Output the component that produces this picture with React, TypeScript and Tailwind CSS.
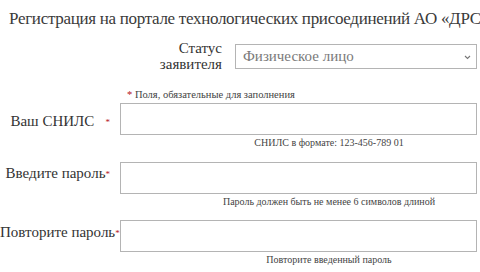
import React from "react";

function Star() {
  return <span className="text-[9px] text-[#b5121b] align-middle">*</span>;
}

interface FieldProps {
  label: React.ReactNode;
  hint: string;
  labelPad: string;
  rowGap: string;
}

function Field({ label, hint, labelPad, rowGap }: FieldProps) {
  return (
    <div className={rowGap}>
      <div className="flex">
        <div className={`w-[120px] shrink-0 pr-[10px] text-right text-[15px] leading-[17px] whitespace-nowrap text-[#333] ${labelPad}`}>
          {label}
        </div>
        <input
          type="text"
          className="h-[32px] w-[357px] border border-[#b4b4b4] bg-white outline-none"
        />
      </div>
      <div className="ml-[181px] w-[296px] text-center text-[10px] leading-[12px] text-[#444] whitespace-nowrap mt-[2px]">
        {hint}
      </div>
    </div>
  );
}

export default function App() {
  return (
    <div className="w-[480px] h-[272px] bg-white overflow-hidden font-['Liberation_Serif','Times_New_Roman',serif]">
      <h1 className="pl-[9px] pt-[8px] text-[17px] leading-[21px] tracking-[-0.3px] text-[#3a3a3a] whitespace-nowrap">
        Регистрация на портале технологических присоединений АО «ДРСК»
      </h1>

      <div className="flex items-center mt-[11px]">
        <div className="w-[223px] shrink-0 pr-[1px] text-right text-[15px] leading-[16px] text-[#333]">
          Статус
          <br />
          заявителя
        </div>
        <div className="relative ml-[12px] h-[25px] w-[242px] border border-[#b4b4b4] bg-white">
          <span className="absolute left-[7px] top-[3px] text-[15px] leading-[17px] text-[#7a7a7a]">
            Физическое лицо
          </span>
          <svg className="absolute right-[5px] top-[10px]" width="7" height="5" viewBox="0 0 7 5">
            <path d="M1 1 L3.5 3.5 L6 1" fill="none" stroke="#777" strokeWidth="1.1" />
          </svg>
        </div>
      </div>

      <div className="pl-[127px] mt-[17px] text-[10.5px] leading-[12px] text-[#444] whitespace-nowrap">
        <span className="text-[#b5121b]">*</span> Поля, обязательные для заполнения
      </div>

      <Field
        rowGap="mt-[2px]"
        labelPad="pt-[10px]"
        label={
          <>
            Ваш СНИЛС&nbsp;&nbsp;&nbsp;<Star />
          </>
        }
        hint="СНИЛС в формате: 123-456-789 01"
      />
      <Field
        rowGap="mt-[13px]"
        labelPad="pt-[3px]"
        label={
          <>
            Введите пароль<Star />
          </>
        }
        hint="Пароль должен быть не менее 6 символов длиной"
      />
      <Field
        rowGap="mt-[12px]"
        labelPad="pt-[4px]"
        label={
          <>
            Повторите пароль<Star />
          </>
        }
        hint="Повторите введенный пароль"
      />
    </div>
  );
}
